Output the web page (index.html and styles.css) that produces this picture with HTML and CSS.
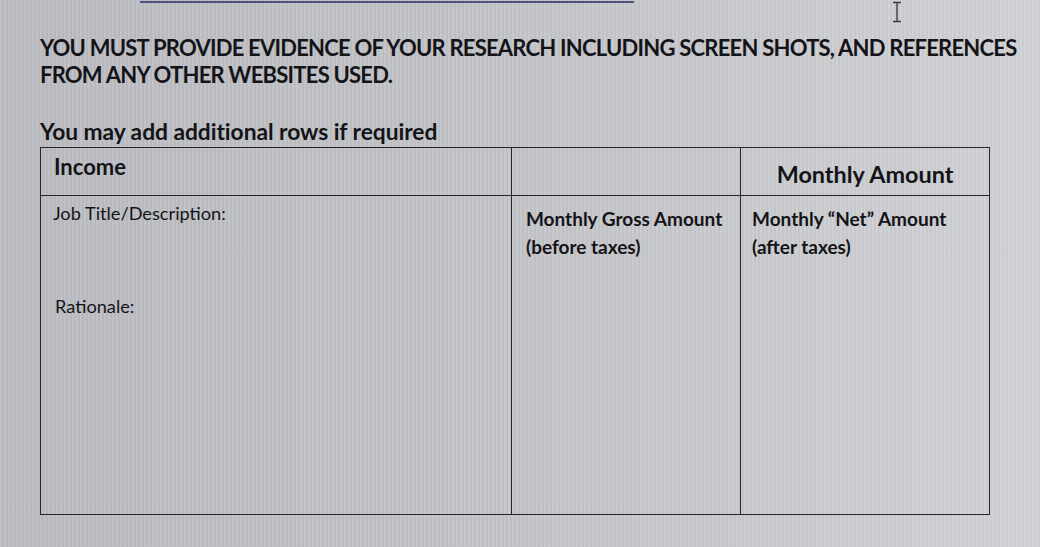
FILE: index.html
```html
<!DOCTYPE html>
<html lang="en">
<head>
<meta charset="utf-8">
<title>Income</title>
<link rel="stylesheet" href="styles.css">
</head>
<body>
<div class="page">
  <div class="link-line"></div>
  <svg class="cursor" width="12" height="22" viewBox="0 0 12 22"><path d="M2 1.5h8M6 1.5v19M2 20.5h8" stroke="#3a3a3e" stroke-width="1.4" fill="none"/></svg>
  <p class="notice">YOU MUST PROVIDE EVIDENCE OF YOUR RESEARCH INCLUDING SCREEN SHOTS, AND REFERENCES<br>FROM ANY OTHER WEBSITES USED.</p>
  <p class="note">You may add additional rows if required</p>
  <table class="income">
    <tr class="head">
      <th class="c1">Income</th>
      <th class="c2"></th>
      <th class="c3 amount">Monthly Amount</th>
    </tr>
    <tr class="body">
      <td class="c1">
        <div class="label">Job Title/Description:</div>
        <div class="label rationale">Rationale:</div>
      </td>
      <td class="c2"><div class="sub">Monthly Gross Amount<br>(before taxes)</div></td>
      <td class="c3"><div class="sub">Monthly “Net” Amount<br>(after taxes)</div></td>
    </tr>
  </table>
</div>
</body>
</html>
```
FILE: styles.css
```css
html, body {
  margin: 0;
  padding: 0;
}
body {
  width: 1040px;
  height: 547px;
  overflow: hidden;
  font-family: "Lato", "Open Sans", sans-serif;
  color: #141418;
  background:
    repeating-linear-gradient(90deg, rgba(255,255,255,0.05) 0 2px, rgba(0,0,0,0.03) 2px 4px),
    linear-gradient(90deg, #bcbdc2 0%, #c3c4c8 45%, #cbccd0 75%, #d2d3d6 100%);
}
.page {
  position: relative;
  height: 547px;
  padding-left: 40px;
  box-sizing: border-box;
}
.link-line {
  position: absolute;
  left: 140px;
  top: 1px;
  width: 494px;
  height: 2px;
  background: #4d5283;
}
.cursor {
  position: absolute;
  left: 891px;
  top: 1px;
}
.notice {
  margin: 0;
  padding-top: 34px;
  font-size: 22px;
  line-height: 27px;
  font-weight: 700;
  letter-spacing: -0.77px;
}
.note {
  margin: 0;
  padding-top: 30px;
  font-size: 22.8px;
  line-height: 26px;
  font-weight: 700;
  letter-spacing: -0.05px;
}
.income {
  margin-top: 3px;
  border-collapse: collapse;
  width: 950px;
}
.income th, .income td {
  border: 1.5px solid #26262a;
  vertical-align: top;
  text-align: left;
  padding: 0;
}
.c1 { width: 472px; }
.c2 { width: 229px; }
.c3 { width: 249px; }
.head th {
  height: 48px;
  font-size: 22px;
  line-height: 26px;
  font-weight: 700;
  padding: 6px 0 0 13px;
  box-sizing: border-box;
}
.head th.amount {
  text-align: center;
  font-size: 23.4px;
  line-height: 28px;
  padding: 12px 0 0 0;
}
.body td {
  height: 318px;
}
.label {
  font-size: 18.2px;
  line-height: 22px;
  padding: 6px 0 0 12px;
}
.rationale {
  padding-top: 71px;
  padding-left: 14px;
}
.sub {
  font-size: 19px;
  font-weight: 700;
  line-height: 28px;
  padding: 9px 0 0 14px;
}
.c3 .sub {
  padding-left: 11px;
}
```
